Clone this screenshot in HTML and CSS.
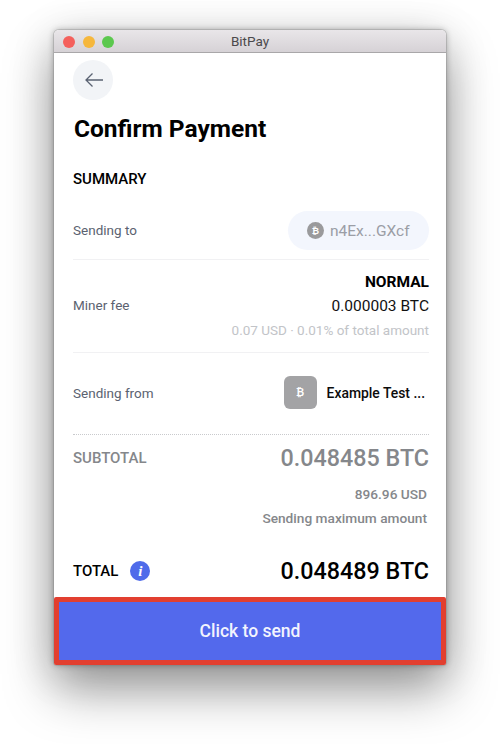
FILE: index.html
```html
<!DOCTYPE html>
<html lang="en">
<head>
<meta charset="utf-8">
<title>BitPay</title>
<link rel="stylesheet" href="styles.css">
</head>
<body>
<main class="window">
  <header class="titlebar">
    <div class="lights"><span class="light red"></span><span class="light yellow"></span><span class="light green"></span></div>
    <span class="title">BitPay</span>
  </header>
  <section class="content">
    <button class="back" aria-label="Back">
      <svg width="20" height="16" viewBox="0 0 20 16" fill="none" stroke="#5a6272" stroke-width="1.300"><path d="M19 8H2M8.500 1.500 2 8l6.500 6.500"/></svg>
    </button>
    <h1>Confirm Payment</h1>
    <h2>SUMMARY</h2>
    <div class="row to">
      <span class="label">Sending to</span>
      <span class="pill"><span class="coin">₿</span>n4Ex...GXcf</span>
    </div>
    <div class="row fee">
      <span class="label">Miner fee</span>
      <div class="fee-values">
        <strong>NORMAL</strong>
        <span class="fee-btc">0.000003 BTC</span>
        <span class="fee-note">0.07 USD · 0.01% of total amount</span>
      </div>
    </div>
    <div class="row from">
      <span class="label">Sending from</span>
      <span class="wallet"><span class="wallet-icon">₿</span><span class="wallet-name">Example Test ...</span></span>
    </div>
    <div class="row subtotal">
      <span class="subtotal-label">SUBTOTAL</span>
      <span class="subtotal-amount">0.048485 BTC</span>
    </div>
    <div class="sub-note usd">896.96 USD</div>
    <div class="sub-note max">Sending maximum amount</div>
    <div class="row total">
      <span class="total-label">TOTAL<span class="info">i</span></span>
      <span class="total-amount">0.048489 BTC</span>
    </div>
  </section>
  <button class="send">Click to send</button>
</main>
</body>
</html>
```
FILE: styles.css
```css
* { box-sizing: border-box; }
html, body { margin: 0; height: 100%; }
body {
  width: 500px;
  height: 744px;
  padding: 30px 54px 0;
  background: #fff;
  font-family: Roboto, "Liberation Sans", sans-serif;
  overflow: hidden;
}
.window {
  width: 392px;
  height: 635px;
  display: flex;
  flex-direction: column;
  background: #fff;
  border-radius: 5px 5px 3px 3px;
  box-shadow: 0 0 0 1px rgba(130,130,130,.3), 0 0 6px rgba(0,0,0,.3), 0 26px 50px rgba(0,0,0,.36), 0 6px 44px rgba(0,0,0,.16);
}
.titlebar {
  position: relative;
  height: 23px;
  flex: none;
  display: flex;
  align-items: center;
  justify-content: center;
  background: linear-gradient(#e9e6e9, #d6d2d6);
  border-radius: 5px 5px 0 0;
  border-bottom: 1px solid #a9a7a9;
}
.lights { position: absolute; left: 9px; top: 6px; display: flex; gap: 7.500px; }
.light { width: 12px; height: 12px; border-radius: 50%; }
.red { background: #f4605c; }
.yellow { background: #f6b73c; }
.green { background: #5cc84e; }
.title { font-size: 13.500px; color: #4b494c; }
.content { flex: 1; padding: 7px 17px 0 19px; }
.back {
  display: flex;
  align-items: center;
  justify-content: center;
  width: 40px;
  height: 40px;
  padding: 0 0 0 2px;
  border: 0;
  border-radius: 50%;
  background: #f2f4f7;
}
h1 { margin: 15px 0 0 1px; font-size: 24.500px; line-height: 28px; font-weight: 700; color: #000; }
h2 { margin: 26px 0 0; font-size: 15px; line-height: 20px; font-weight: 500; color: #000; }
.row { display: flex; justify-content: space-between; align-items: center; }
.label { font-size: 13.500px; color: #5b6270; }
.to .label, .fee .label { margin-bottom: 2px; }
.to { margin-top: 22px; padding-bottom: 9px; border-bottom: 1px solid #f1f1f3; }
.pill {
  display: flex;
  align-items: center;
  width: 141px;
  height: 39px;
  padding-left: 19px;
  border-radius: 20px;
  background: #f3f6fd;
  font-size: 15.500px;
  color: #9b9ea6;
}
.coin {
  display: flex;
  align-items: center;
  justify-content: center;
  width: 17px;
  height: 17px;
  margin-right: 6px;
  border-radius: 50%;
  background: #9a9a9c;
  color: #fff;
  font-size: 9px;
  font-weight: 700;
}
.fee { height: 93px; border-bottom: 1px solid #f1f1f3; }
.fee-values { display: flex; flex-direction: column; align-items: flex-end; }
.fee-values strong { font-size: 15.500px; line-height: 24px; font-weight: 700; color: #000; }
.fee-btc { font-size: 15.500px; line-height: 24px; color: #111; }
.fee-note { font-size: 13.500px; line-height: 24px; color: #c2c4c8; }
.from { height: 82px; padding-bottom: 2px; border-bottom: 1px dotted #c9cacd; }
.wallet { display: flex; align-items: center; gap: 10px; padding-right: 4px; }
.wallet-icon {
  display: flex;
  align-items: center;
  justify-content: center;
  width: 33px;
  height: 33px;
  border-radius: 6px;
  background: #a3a3a5;
  color: #fff;
  font-size: 10px;
  font-weight: 700;
}
.wallet-name { font-size: 13.900px; font-weight: 500; color: #0c0c0c; }
.subtotal { height: 46px; }
.subtotal-label { font-size: 15px; font-weight: 500; color: #85878b; }
.subtotal-amount { font-size: 23.300px; font-weight: 500; color: #85878b; }
.sub-note { padding-right: 2px; text-align: right; font-size: 13.700px; line-height: 24px; font-weight: 500; color: #85878b; }
.usd { margin-top: 1px; }
.total { margin-top: 27px; height: 28px; }
.total-label { display: flex; align-items: center; gap: 12px; font-size: 15px; font-weight: 500; color: #000; }
.info {
  display: flex;
  align-items: center;
  justify-content: center;
  width: 20px;
  height: 20px;
  border-radius: 50%;
  background: #4f6bea;
  color: #fff;
  font: italic 700 15px "Liberation Serif", serif;
}
.total-amount { font-size: 23.300px; font-weight: 500; color: #000; }
.send {
  flex: none;
  height: 68px;
  padding: 0;
  border: 5px solid #e23f30;
  border-radius: 2px;
  background: #5369ec;
  color: #f2f4fe;
  font: 500 17.500px Roboto, sans-serif;
}
```
